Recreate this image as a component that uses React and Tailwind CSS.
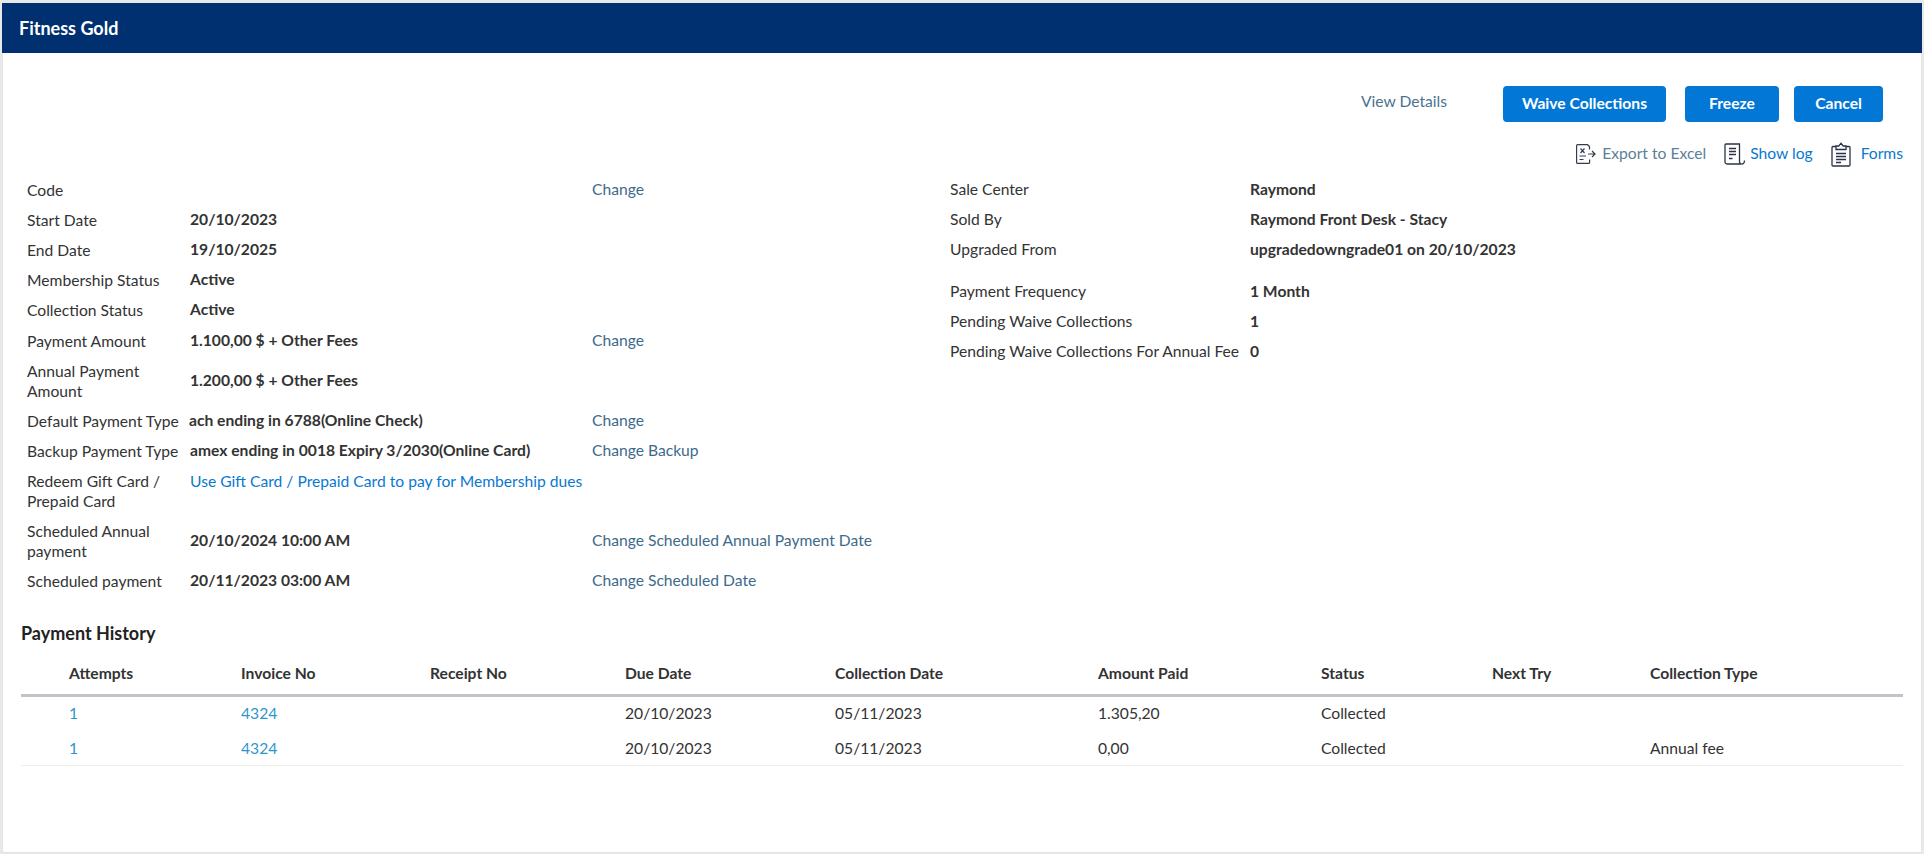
import React from "react"

const leftRows = [
  { label: "Code", value: "", link: "Change", h: "h-[30px]" },
  { label: "Start Date", value: "20/10/2023", h: "h-[30px]" },
  { label: "End Date", value: "19/10/2025", h: "h-[30px]" },
  { label: "Membership Status", value: "Active", h: "h-[30px]" },
  { label: "Collection Status", value: "Active", h: "h-[30px]" },
  { label: "Payment Amount", value: "1.100,00 $ + Other Fees", link: "Change", h: "h-[31px]" },
  { label: "Annual Payment Amount", value: "1.200,00 $ + Other Fees", h: "h-[50px]" },
  { label: "Default Payment Type", value: "ach ending in 6788(Online Check)", link: "Change", h: "h-[30px]", shift: true },
  { label: "Backup Payment Type", value: "amex ending in 0018 Expiry 3/2030(Online Card)", link: "Change Backup", h: "h-[30px]" },
  { label: "Redeem Gift Card / Prepaid Card", blue: "Use Gift Card / Prepaid Card to pay for Membership dues", h: "h-[50px]" },
  { label: "Scheduled Annual payment", value: "20/10/2024 10:00 AM", link: "Change Scheduled Annual Payment Date", h: "h-[50px]" },
  { label: "Scheduled payment", value: "20/11/2023 03:00 AM", link: "Change Scheduled Date", h: "h-[30px]" },
]

const rightTop = [
  ["Sale Center", "Raymond"],
  ["Sold By", "Raymond Front Desk - Stacy"],
  ["Upgraded From", "upgradedowngrade01 on 20/10/2023"],
]

const rightBottom = [
  ["Payment Frequency", "1 Month"],
  ["Pending Waive Collections", "1"],
  ["Pending Waive Collections For Annual Fee", "0"],
]

const columns = [
  { name: "Attempts", w: "w-[220px]", cls: "pl-[48px]" },
  { name: "Invoice No", w: "w-[189px]" },
  { name: "Receipt No", w: "w-[195px]" },
  { name: "Due Date", w: "w-[210px]" },
  { name: "Collection Date", w: "w-[263px]" },
  { name: "Amount Paid", w: "w-[223px]" },
  { name: "Status", w: "w-[171px]" },
  { name: "Next Try", w: "w-[158px]" },
  { name: "Collection Type", w: "" },
]

const payments = [
  ["1", "4324", "", "20/10/2023", "05/11/2023", "1.305,20", "Collected", "", ""],
  ["1", "4324", "", "20/10/2023", "05/11/2023", "0,00", "Collected", "", "Annual fee"],
]

function ExcelIcon() {
  return (
    <svg width="20" height="20" viewBox="0 0 20 20" fill="none" stroke="#333f50" strokeWidth="1.2">
      <path d="M13.5 5.5V2.5L11.5.7H1.6a1 1 0 0 0-1 1v16.7a1 1 0 0 0 1 1h11a1 1 0 0 0 1-1v-3" />
      <path d="M4.5 4.5l4 4.5M8.5 4.5l-4 4.5M3.5 12h6.5M3.5 15.5h4" />
      <path d="M12 10h7M16 7l3 3-3 3" />
    </svg>
  )
}

function LogIcon() {
  return (
    <svg width="22" height="22" viewBox="0 0 22 22" fill="none" stroke="#2a3348" strokeWidth="1.3">
      <path d="M2 1h13.5v17.5c0 1.5.7 2.5 2 2.5H3a2 2 0 0 1-2-2V2a1 1 0 0 1 1-1z" />
      <path d="M17.5 21c1.7 0 3-1.3 3-3.500" />
      <path d="M5 5.500h7M5 8.500h7M5 11.500h7M5 15.500h3.500" />
    </svg>
  )
}

function FormsIcon() {
  return (
    <svg width="20" height="25" viewBox="0 0 20 25" fill="none" stroke="#2a3348" strokeWidth="1.3">
      <path d="M5 4.500H2a1 1 0 0 0-1 1V23a1 1 0 0 0 1 1h16a1 1 0 0 0 1-1V5.500a1 1 0 0 0-1-1h-3" />
      <path d="M5 7.500V4h2.800L10 1.200 12.200 4H15v3.500H5z" />
      <path d="M5 11.500h10M5 14.500h10M5 17.500h10M5 20.500h5" />
    </svg>
  )
}

function DetailRow({ row }) {
  return (
    <div className={`flex items-center ${row.h}`}>
      <div className="w-[163px] shrink-0 pr-2 leading-[20px]">{row.label}</div>
      <div className={`w-[402px] shrink-0 font-bold ${row.shift ? "-ml-px" : ""} ${row.blue ? "mb-[19px]" : ""}`}>
        {row.value}
        {row.blue && <a className="font-normal text-[#0a78d1]">{row.blue}</a>}
      </div>
      {row.link && <a className={`text-[#3d6a8a] ${row.shift ? "ml-px" : ""}`}>{row.link}</a>}
    </div>
  )
}

function SideRow({ label, value }) {
  return (
    <div className="flex h-[30px] items-center">
      <div className="w-[300px] shrink-0">{label}</div>
      <div className="font-bold">{value}</div>
    </div>
  )
}

export default function App() {
  return (
    <div className="h-[854px] bg-[#e9e9e9] pt-[3px] text-[15.65px] text-[#333] [font-family:Lato,sans-serif]">
      <div className="mx-[2px] flex h-[850px] flex-col border-x border-b border-[#e3e3e3] bg-white">
        <div className="-mx-px flex h-[50px] shrink-0 items-center bg-[#003070] pl-[17px] text-[18px] font-bold text-white">
          Fitness Gold
        </div>

        <div className="mt-[33px] flex h-[36px] items-center justify-end pr-[38px]">
          <a className="mr-[56px] -translate-y-[2px] text-[#4a7390]">View Details</a>
          <div className="flex font-bold text-white">
            <button className="h-[36px] w-[163px] rounded-[4px] bg-[#0277d6]">Waive Collections</button>
            <button className="ml-[19px] h-[36px] w-[94px] rounded-[4px] bg-[#0277d6]">Freeze</button>
            <button className="ml-[15px] h-[36px] w-[89px] rounded-[4px] bg-[#0277d6]">Cancel</button>
          </div>
        </div>

        <div className="mt-[18px] mb-[7px] flex h-[28px] items-center justify-end pr-[18px]">
          <a className="flex items-center gap-[6px] text-[#5e7f96]">
            <ExcelIcon />
            Export to Excel
          </a>
          <a className="ml-[18px] flex items-center gap-[4px] text-[#0a78d1]">
            <LogIcon />
            Show log
          </a>
          <a className="ml-[18px] flex items-center gap-[10px] text-[#0a78d1]">
            <FormsIcon />
            Forms
          </a>
        </div>

        <div className="flex pl-[24px]">
          <div className="w-[923px] shrink-0">
            {leftRows.map((row) => (
              <DetailRow key={row.label} row={row} />
            ))}
          </div>
          <div>
            {rightTop.map(([label, value]) => (
              <SideRow key={label} label={label} value={value} />
            ))}
            <div className="h-[12px]" />
            {rightBottom.map(([label, value]) => (
              <SideRow key={label} label={label} value={value} />
            ))}
          </div>
        </div>

        <div className="mt-[24px] pl-[18px] text-[18px] font-bold leading-[26px] text-[#222]">Payment History</div>

        <div className="mt-[7px] ml-[18px] mr-[18px]">
          <table className="w-full table-fixed border-collapse">
            <thead>
              <tr className="h-[42px] border-b-[3px] border-[#c1c5ca]">
                {columns.map((col) => (
                  <th key={col.name} className={`${col.w} ${col.cls || ""} p-0 text-left font-bold`}>
                    {col.name}
                  </th>
                ))}
              </tr>
            </thead>
            <tbody>
              {payments.map((row, i) => (
                <tr key={i} className={i === 0 ? "h-[36px]" : "h-[34px] border-b border-[#eee]"}>
                  {row.map((cell, j) => (
                    <td
                      key={j}
                      className={`p-0 ${i === 1 ? "pt-[2px]" : ""} ${j === 0 ? "pl-[48px]" : ""} ${j < 2 ? "text-[#2f96cc]" : ""}`}
                    >
                      {cell}
                    </td>
                  ))}
                </tr>
              ))}
            </tbody>
          </table>
        </div>
      </div>
    </div>
  )
}
